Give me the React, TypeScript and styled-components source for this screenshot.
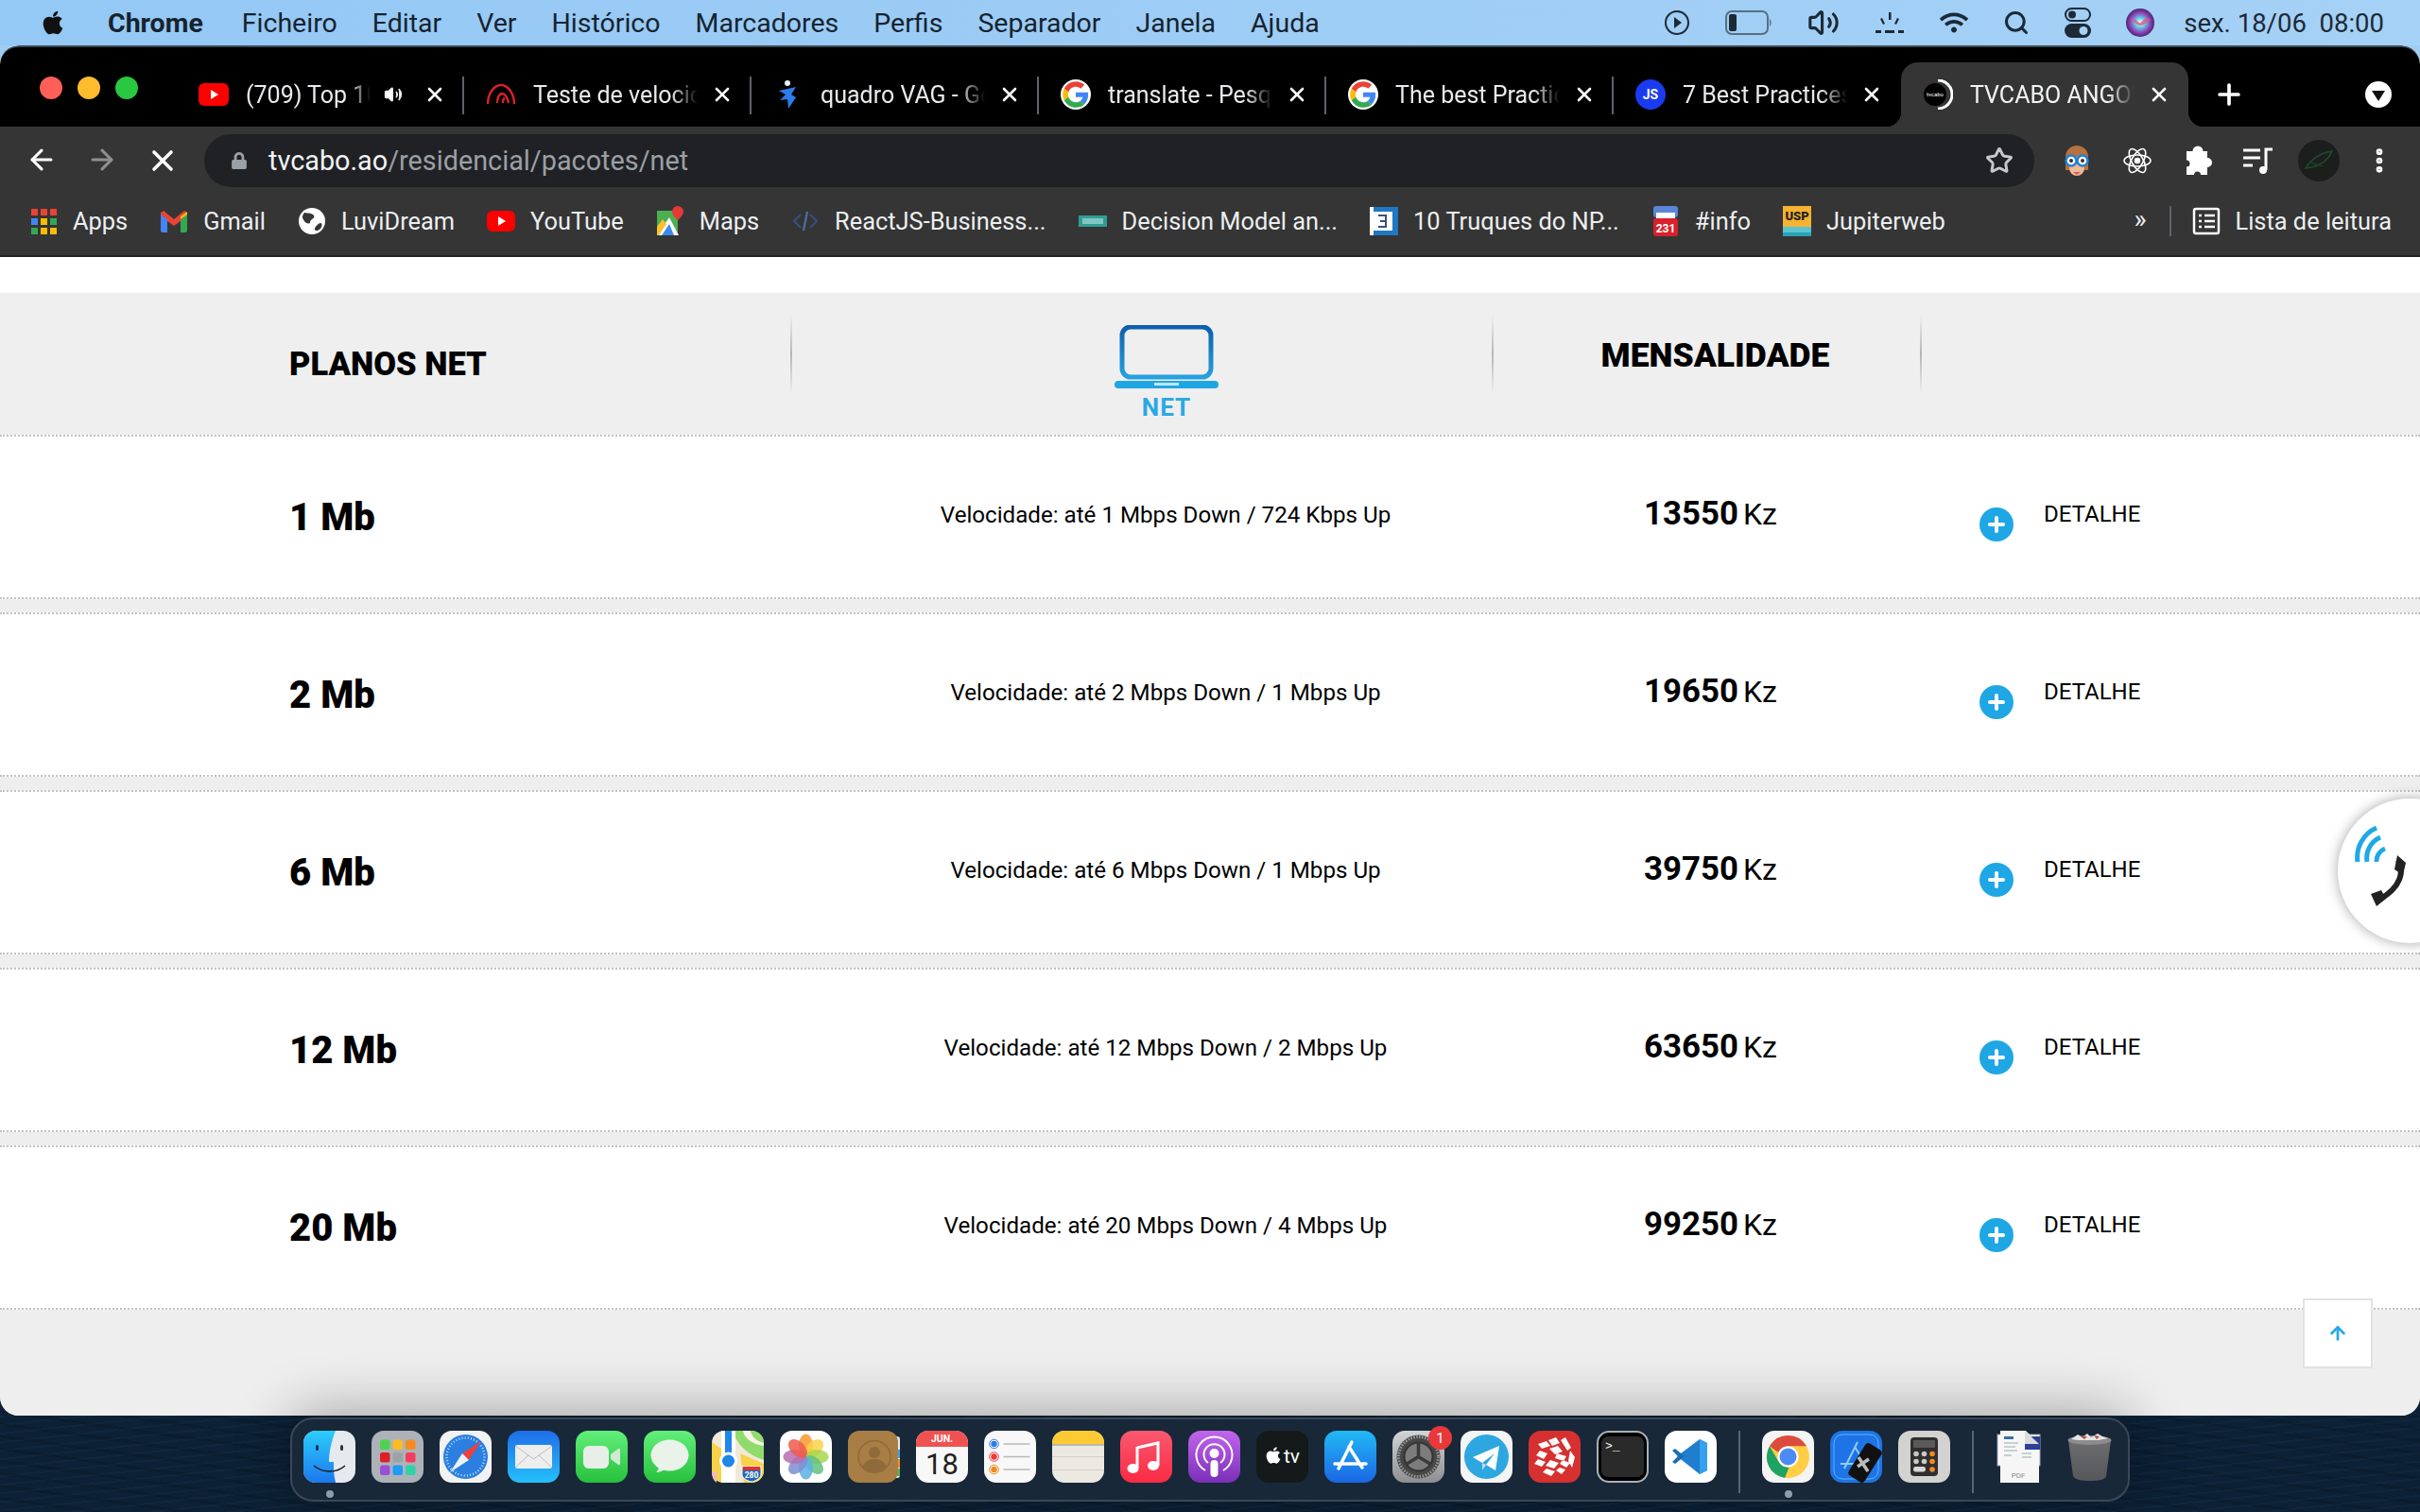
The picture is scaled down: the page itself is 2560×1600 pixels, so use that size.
import React from 'react';
import styled, { createGlobalStyle } from 'styled-components';
import { ArrowLeft, ArrowRight, X, Plus, Star, Search, MoreVertical, Volume2 } from 'lucide-react';
import { FaApple, FaLock, FaWifi } from 'react-icons/fa';

const GlobalStyle = createGlobalStyle`
  html, body {
    margin: 0;
    padding: 0;
    background: #0c2135;
  }
  * {
    box-sizing: border-box;
  }
`;

const Screen = styled.div`
  width: 2560px;
  height: 1600px;
  display: flex;
  flex-direction: column;
  overflow: hidden;
  font-family: Roboto, 'Liberation Sans', sans-serif;
  background: linear-gradient(#9ccdf6 0 90px, #0c2135 90px);
`;

/* mac menu bar */
const MenuBar = styled.div`
  height: 48px;
  flex: none;
  display: flex;
  align-items: center;
  padding: 0 38px 0 42px;
  background: linear-gradient(90deg, #94c8f5, #a6d1f6);
  color: #16232e;
  font-size: 28.5px;
`;

const MenuList = styled.div`
  display: flex;
  align-items: center;
  gap: 37px;
`;

const AppleMark = styled(FaApple)`
  margin-right: 7px;
`;

const MenuItem = styled.span<{ $bold?: boolean }>`
  font-weight: ${(p) => (p.$bold ? 700 : 400)};
  margin-right: ${(p) => (p.$bold ? 4 : 0)}px;
  white-space: nowrap;
`;

const StatusArea = styled.div`
  margin-left: auto;
  display: flex;
  align-items: center;
  gap: 37px;
  color: #1c2a36;
`;

const Clock = styled.span`
  white-space: pre;
  font-size: 27.5px;
  margin-left: -6px;
`;

/* browser window */
const Window = styled.div`
  height: 1450px;
  flex: none;
  display: flex;
  flex-direction: column;
  border-radius: 20px;
  overflow: hidden;
  background: #eee;
  position: relative;
`;

const TabStrip = styled.div`
  height: 86px;
  flex: none;
  display: flex;
  align-items: flex-end;
  background: #000;
  border-top: 2px solid #3e4a55;
  border-radius: 20px 20px 0 0;
`;

const TrafficLights = styled.div`
  width: 187px;
  flex: none;
  align-self: flex-start;
  display: flex;
  gap: 16px;
  padding: 31px 0 0 42px;
`;

const Light = styled.span<{ $color: string }>`
  width: 24px;
  height: 24px;
  border-radius: 50%;
  background: ${(p) => p.$color};
`;

const Tab = styled.div<{ $active?: boolean; $last?: boolean }>`
  width: 304px;
  height: 68px;
  flex: none;
  display: flex;
  align-items: center;
  padding: 0 19px 0 23px;
  position: relative;
  color: ${(p) => (p.$active ? '#f1f3f4' : '#e8eaed')};
  background: ${(p) => (p.$active ? '#353535' : 'transparent')};
  border-radius: 18px 18px 0 0;
  font-size: 25px;

  ${(p) =>
    !p.$active && !p.$last
      ? `&::after {
    content: '';
    position: absolute;
    right: 0;
    top: 15px;
    height: 40px;
    width: 2px;
    background: #5f6368;
  }`
      : ''}

  ${(p) =>
    p.$active
      ? `&::before, &::after {
    content: '';
    position: absolute;
    bottom: 0;
    width: 16px;
    height: 16px;
  }
  &::before {
    left: -16px;
    background: radial-gradient(circle at 0 0, transparent 16px, #353535 16.5px);
  }
  &::after {
    right: -16px;
    background: radial-gradient(circle at 100% 0, transparent 16px, #353535 16.5px);
  }`
      : ''}
`;

const Favicon = styled.svg`
  width: 32px;
  height: 32px;
  flex: none;
`;

const TabTitle = styled.span<{ $short?: boolean }>`
  margin-left: 18px;
  width: ${(p) => (p.$short ? 132 : 174)}px;
  flex: none;
  overflow: hidden;
  white-space: nowrap;
  -webkit-mask-image: linear-gradient(90deg, #000 84%, transparent);
  mask-image: linear-gradient(90deg, #000 84%, transparent);
`;

const SoundIcon = styled(Volume2)`
  margin-left: 14px;
  flex: none;
`;

const TabButton = styled.span`
  margin-left: auto;
  display: flex;
  color: #fff;
`;

const NewTab = styled.div`
  width: 70px;
  height: 68px;
  margin-left: 8px;
  display: flex;
  align-items: center;
  justify-content: center;
  color: #fff;
`;

const TabSearch = styled.div`
  width: 28px;
  height: 28px;
  margin: 0 0 20px 109px;
  border-radius: 50%;
  background: #fff;
  display: flex;
  align-items: center;
  justify-content: center;
  &::after {
    content: '';
    border-left: 7px solid transparent;
    border-right: 7px solid transparent;
    border-top: 11px solid #111;
    margin-top: 3px;
  }
`;

const Toolbar = styled.div`
  height: 72px;
  flex: none;
  display: flex;
  align-items: center;
  background: #353535;
  color: #fff;
`;

const NavButton = styled.div<{ $dim?: boolean }>`
  width: 64px;
  display: flex;
  justify-content: center;
  color: ${(p) => (p.$dim ? '#8f8f8f' : '#fff')};
`;

const NavGroup = styled.div`
  width: 216px;
  flex: none;
  padding-left: 12px;
  display: flex;
`;

const AddressBar = styled.div`
  width: 1936px;
  height: 56px;
  flex: none;
  border-radius: 28px;
  background: #202124;
  display: flex;
  align-items: center;
  padding: 0 22px 0 28px;
  font-size: 28.8px;
  color: #9aa0a6;
`;

const Domain = styled.span`
  color: #f1f3f4;
`;

const UrlText = styled.span`
  margin-left: 22px;
`;

const StarSlot = styled.span`
  margin-left: auto;
  display: flex;
  color: #c7c7c7;
`;

const ExtensionRow = styled.div`
  flex: 1;
  display: flex;
  align-items: center;
  gap: 20px;
  padding-left: 23px;
  color: #fff;
`;

const ExtensionSlot = styled.span`
  width: 44px;
  height: 44px;
  display: flex;
  align-items: center;
  justify-content: center;
`;

const BookmarkBar = styled.div`
  height: 66px;
  flex: none;
  display: flex;
  align-items: center;
  padding: 0 30px 8px 31px;
  background: #353535;
  border-bottom: 2px solid #232323;
  color: #eceff1;
  font-size: 25.4px;
`;

const BookmarkList = styled.div`
  display: flex;
  align-items: center;
  gap: 34px;
`;

const Bookmark = styled.div`
  display: flex;
  align-items: center;
  gap: 16px;
  white-space: nowrap;
`;

const BookmarkIcon = styled.svg`
  width: 30px;
  height: 32px;
  flex: none;
`;

const ReadingList = styled.div`
  margin-left: auto;
  display: flex;
  align-items: center;
  white-space: nowrap;
`;

const More = styled.span`
  font-size: 28px;
  padding-right: 24px;
  border-right: 2px solid #5f6368;
  height: 32px;
  line-height: 28px;
  margin-right: 22px;
`;

/* web page */
const Page = styled.div`
  flex: 1;
  display: flex;
  flex-direction: column;
  padding-top: 38px;
  background: linear-gradient(#fff 0 38px, #eee 38px);
  color: #000;
`;

const PlanHeader = styled.div`
  height: 150px;
  flex: none;
  display: grid;
  grid-template-columns: 838px 742px 453px 1fr;
  align-content: start;
  padding-top: 24px;
  background: #efefef;
`;

const HeaderCell = styled.div<{ $divider?: boolean }>`
  height: 82px;
  display: flex;
  align-items: center;
  border-right: ${(p) => (p.$divider ? '2px solid #bdbdbd' : 'none')};
  border-image: ${(p) => (p.$divider ? 'linear-gradient(transparent, #b5b5b5 50%, transparent) 1' : 'none')};
`;

const PlansTitle = styled(HeaderCell)`
  padding: 20px 0 0 306px;
  font-size: 34.5px;
  font-weight: 900;
`;

const NetCell = styled(HeaderCell)`
  flex-direction: column;
  justify-content: flex-start;
  padding: 10px 0 0 52px;
`;

const LaptopSvg = styled.svg`
  width: 110px;
  height: 68px;
  flex: none;
`;

const NetLabel = styled.div`
  margin-top: 7px;
  color: #2aa9e4;
  font-size: 26px;
  line-height: 24px;
  font-weight: 700;
  letter-spacing: 1px;
  flex: none;
`;

const MonthlyTitle = styled(HeaderCell)`
  justify-content: center;
  padding: 2px 0 0 18px;
  font-size: 35.5px;
  font-weight: 900;
`;

const PlanList = styled.div`
  display: flex;
  flex-direction: column;
  gap: 14px;
`;

const PlanRow = styled.div`
  height: 174px;
  display: grid;
  grid-template-columns: 838px 742px 453px 1fr;
  align-items: center;
  background: #fff;
  border-top: 2px dotted #c2c2c2;
  border-bottom: 2px dotted #c2c2c2;
`;

const PlanName = styled.div`
  padding-left: 306px;
  font-size: 40px;
  font-weight: 900;
`;

const PlanSpeed = styled.div`
  padding: 0 0 4px 48px;
  text-align: center;
  font-size: 24.15px;
`;

const PlanPrice = styled.div`
  padding: 0 0 8px 6px;
  text-align: center;
  font-size: 34.8px;
  font-weight: 700;
`;

const Currency = styled.span`
  font-size: 32px;
  font-weight: 400;
  margin-left: 5px;
`;

const DetailCell = styled.div`
  display: flex;
  align-items: center;
  gap: 32px;
  padding-left: 61px;
  font-size: 24px;
`;

const PlusIcon = styled.span`
  width: 36px;
  height: 36px;
  margin-top: 16px;
  border-radius: 50%;
  background: #1ea7e4;
  color: #fff;
  display: flex;
  align-items: center;
  justify-content: center;
`;

const DetailText = styled.span`
  margin-bottom: 6px;
`;

const PhoneBubble = styled.div`
  position: fixed;
  top: 845px;
  left: 2473px;
  width: 153px;
  height: 153px;
  padding: 25px 0 0 17px;
  border-radius: 50%;
  background: #fff;
  box-shadow: 0 0 14px rgba(0, 0, 0, 0.35);
`;

const BackToTop = styled.div`
  position: fixed;
  top: 1374px;
  left: 2436px;
  width: 74px;
  height: 74px;
  background: #fff;
  border: 2px solid #e2e2e2;
  display: flex;
  align-items: center;
  justify-content: center;
  color: #2aa8ea;
`;

const UpArrow = styled(ArrowRight)`
  transform: rotate(-90deg);
`;

/* dock */
const DockArea = styled.div`
  flex: 1;
  position: relative;
  z-index: 2;
  display: flex;
  justify-content: center;
  padding-top: 2px;
  background: repeating-linear-gradient(174deg, rgba(120, 160, 190, 0.04) 0 2px, transparent 2px 9px),
    repeating-linear-gradient(8deg, rgba(0, 0, 0, 0.14) 0 3px, transparent 3px 13px), #0c2135;
`;

const Dock = styled.div`
  width: 1946px;
  height: 89px;
  display: flex;
  gap: 17px;
  padding: 12px 12px 0;
  background: #182839;
  border: 2px solid #3a4857;
  border-radius: 24px;
  box-shadow: 0 -6px 60px rgba(0, 0, 0, 0.32);
`;

const DockSlot = styled.div`
  width: 55px;
  height: 55px;
  flex: none;
  position: relative;
`;

const DockSvg = styled.svg`
  width: 55px;
  height: 55px;
  display: block;
`;

const RunningDot = styled.span`
  position: absolute;
  left: 24px;
  bottom: -16px;
  width: 8px;
  height: 8px;
  border-radius: 50%;
  background: #8c9db2;
`;

const Badge = styled.span`
  position: absolute;
  top: -5px;
  right: -8px;
  width: 25px;
  height: 25px;
  border-radius: 50%;
  background: #e8383a;
  color: #fff;
  font-size: 15px;
  display: flex;
  align-items: center;
  justify-content: center;
`;

const DockDivider = styled.span`
  width: 2px;
  height: 66px;
  flex: none;
  margin: 0 6px;
  background: #55647a;
`;

const GoogleG = () => (
  <Favicon viewBox="-4 -4 56 56">
    <circle cx="24" cy="24" r="28" fill="#fff" />
    <path fill="#EA4335" d="M24 9.5c3.54 0 6.71 1.22 9.21 3.6l6.85-6.85C35.9 2.38 30.47 0 24 0 14.62 0 6.51 5.38 2.56 13.22l7.98 6.19C12.43 13.72 17.74 9.5 24 9.5z" />
    <path fill="#4285F4" d="M46.98 24.55c0-1.57-.15-3.09-.38-4.55H24v9.02h12.94c-.58 2.96-2.26 5.48-4.78 7.18l7.73 6c4.51-4.18 7.09-10.36 7.09-17.65z" />
    <path fill="#FBBC05" d="M10.53 28.59c-.48-1.45-.76-2.99-.76-4.59s.27-3.14.76-4.59l-7.98-6.19C.92 16.46 0 20.12 0 24c0 3.88.92 7.54 2.56 10.78l7.97-6.19z" />
    <path fill="#34A853" d="M24 48c6.48 0 11.93-2.13 15.89-5.81l-7.73-6c-2.15 1.45-4.92 2.3-8.16 2.3-6.26 0-11.57-4.22-13.47-9.91l-7.98 6.19C6.51 42.62 14.62 48 24 48z" />
  </Favicon>
);

const YoutubeIcon = () => (
  <Favicon viewBox="0 0 32 32">
    <rect x="0" y="4" width="32" height="24" rx="6" fill="#f00" />
    <path d="M13 11l8 5-8 5z" fill="#fff" />
  </Favicon>
);

const SpeedIcon = () => (
  <Favicon viewBox="0 0 32 32" fill="none" stroke="#d9202c" strokeWidth="2.4">
    <path d="M2 26C2 16 8 6 16 6s14 10 14 20" />
    <path d="M12 25c0-5 2-10 5-10s6 4 7 10" />
    <path d="M18 25c0-3 1-5 2-5" />
  </Favicon>
);

const QuadroIcon = () => (
  <Favicon viewBox="0 0 32 32">
    <circle cx="15" cy="4" r="3" fill="#e8f0ff" />
    <path d="M6 12l18-4-5 8 5 3-8 12-1-10-8 1 6-6z" fill="#2b7de9" />
  </Favicon>
);

const JsIcon = () => (
  <Favicon viewBox="0 0 32 32">
    <circle cx="16" cy="16" r="16" fill="#1a3bf0" />
    <text x="16" y="21" fontSize="14" fontWeight="700" fill="#fff" textAnchor="middle" fontFamily="Roboto">JS</text>
  </Favicon>
);

const TvcaboIcon = () => (
  <Favicon viewBox="0 0 32 32">
    <path d="M16 1a15 15 0 0 1 0 30" fill="none" stroke="#fff" strokeWidth="3" />
    <circle cx="13" cy="16" r="12" fill="#000" />
    <text x="13" y="18" fontSize="6" fill="#fff" textAnchor="middle" fontFamily="Roboto">tvcabo</text>
  </Favicon>
);

const AppsIcon = () => (
  <BookmarkIcon viewBox="0 0 30 32">
    {[0, 1, 2].map((r) =>
      [0, 1, 2].map((c) => (
        <rect
          key={`${r}${c}`}
          x={2 + c * 10}
          y={3 + r * 10}
          width="7"
          height="7"
          fill={[['#ea4335', '#ea4335', '#ea4335'], ['#4285f4', '#fbbc05', '#34a853'], ['#34a853', '#fbbc05', '#fbbc05']][r][c]}
        />
      ))
    )}
  </BookmarkIcon>
);

const GmailIcon = () => (
  <BookmarkIcon viewBox="0 0 30 32">
    <path d="M1 7l3-2 11 9 11-9 3 2v4L15 21 1 11z" fill="#ea4335" />
    <path d="M1 9l7 5v14H3a2 2 0 0 1-2-2z" fill="#4285f4" />
    <path d="M29 9l-7 5v14h5a2 2 0 0 0 2-2z" fill="#34a853" />
    <path d="M22 14l7-5V6l-7 5z" fill="#fbbc05" />
  </BookmarkIcon>
);

const GlobeIcon = () => (
  <BookmarkIcon viewBox="0 0 30 32">
    <circle cx="15" cy="16" r="14" fill="#fff" />
    <path d="M7 7c4 1 8 0 10 3s-4 4-4 7-5 1-6-1-4-4 0-9zM24 18c2 0 2 3 0 6-2 2-5 3-6 1s4-7 6-7z" fill="#353535" />
  </BookmarkIcon>
);

const YtMark = () => (
  <BookmarkIcon viewBox="0 0 30 32">
    <rect x="0" y="5" width="30" height="22" rx="6" fill="#f00" />
    <path d="M12 11l8 5-8 5z" fill="#fff" />
  </BookmarkIcon>
);

const MapsMark = () => (
  <BookmarkIcon viewBox="0 0 30 32">
    <path d="M1 5l22 0v26H1z" fill="#4caf50" />
    <path d="M1 31L14 12l10 19z" fill="#fff" />
    <path d="M6 31l8-12 5 12z" fill="#3b8be8" />
    <path d="M1 22l6-8 4 5-8 12H1z" fill="#fbc02d" />
    <path d="M23 0a6 6 0 0 1 6 6c0 4-6 9-6 9s-6-5-6-9a6 6 0 0 1 6-6z" fill="#e53935" />
  </BookmarkIcon>
);

const CodeMark = () => (
  <BookmarkIcon viewBox="0 0 30 32" fill="none" stroke="#35507f" strokeWidth="2.2">
    <path d="M10 9l-7 7 7 7M20 9l7 7-7 7" />
    <path d="M17 6l-4 20" stroke="#4a6ea8" />
  </BookmarkIcon>
);

const DecisionMark = () => (
  <BookmarkIcon viewBox="0 0 30 32">
    <rect x="0" y="10" width="30" height="12" fill="#2f9d96" />
    <rect x="4" y="13" width="22" height="6" fill="#b7e3df" opacity="0.6" />
  </BookmarkIcon>
);

const TruquesMark = () => (
  <BookmarkIcon viewBox="0 0 30 32">
    <rect x="0" y="1" width="30" height="30" fill="#fff" />
    <rect x="4" y="1" width="26" height="5" fill="#1f78c1" />
    <rect x="24" y="1" width="6" height="30" fill="#1f78c1" />
    <rect x="4" y="26" width="26" height="5" fill="#1f78c1" />
    <path d="M9 10h8v12H9" fill="none" stroke="#35507f" strokeWidth="2" />
    <path d="M11 16h5" stroke="#35507f" strokeWidth="2" />
  </BookmarkIcon>
);

const InfoMark = () => (
  <BookmarkIcon viewBox="0 0 30 32">
    <rect x="2" y="0" width="26" height="12" rx="3" fill="#5b85d6" />
    <rect x="5" y="7" width="20" height="6" fill="#fff" />
    <rect x="2" y="13" width="26" height="19" rx="3" fill="#d9202c" />
    <text x="15" y="28" fontSize="12" fontWeight="700" fill="#fff" textAnchor="middle" fontFamily="Roboto">231</text>
  </BookmarkIcon>
);

const UspMark = () => (
  <BookmarkIcon viewBox="0 0 30 32">
    <rect x="0" y="0" width="32" height="22" fill="#f7b231" />
    <rect x="0" y="22" width="32" height="6" fill="#5cc4d0" />
    <rect x="0" y="28" width="32" height="4" fill="#2aa3b5" />
    <text x="15" y="15" fontSize="13" fontWeight="900" fill="#222" textAnchor="middle" fontFamily="Roboto">USP</text>
  </BookmarkIcon>
);

const ListMark = () => (
  <BookmarkIcon viewBox="0 0 30 32" fill="none" stroke="#fff" strokeWidth="2.5">
    <rect x="2" y="3" width="26" height="26" rx="2" />
    <path d="M7 10h3M13 10h11M7 16h3M13 16h11M7 22h3M13 22h11" />
  </BookmarkIcon>
);

const LaptopLogo = () => (
  <LaptopSvg viewBox="0 0 110 68">
    <defs>
      <linearGradient id="laptop" x1="0" y1="0" x2="0" y2="1">
        <stop offset="0" stopColor="#0d5fae" />
        <stop offset="1" stopColor="#26a1e0" />
      </linearGradient>
    </defs>
    <rect x="8" y="2" width="94" height="53" rx="9" fill="none" stroke="url(#laptop)" strokeWidth="5" />
    <rect x="0" y="59" width="110" height="8" rx="4" fill="#1ea6e2" />
    <rect x="42" y="61" width="26" height="3" fill="#bfe6f8" />
  </LaptopSvg>
);

const PhoneLogo = () => (
  <svg width="60" height="90" viewBox="0 0 60 90" fill="none">
    <path d="M4 42A34 34 0 0 1 24 6" stroke="#1fa8e4" strokeWidth="5" />
    <path d="M14 42A24 24 0 0 1 28 16" stroke="#1fa8e4" strokeWidth="5" />
    <path d="M24 42A14 14 0 0 1 33 28" stroke="#1fa8e4" strokeWidth="5" />
    <path d="M47 40c6 12 4 28-20 42" stroke="#222" strokeWidth="6" />
    <path d="M46 35l9 8-3 13-9-6z" fill="#222" />
    <path d="M18 76l11-4 5 9-10 8z" fill="#222" />
  </svg>
);

const PuzzleMark = () => (
  <svg width="32" height="34" viewBox="0 0 32 34" fill="#fff">
    <path d="M4 7h6.500a5.500 5.500 0 1 1 11 0H26v7a5 5 0 1 1 0 10v8h-7a3.500 3.500 0 0 0-7 0H4v-8.500a3.500 3.500 0 0 0 0-7z" />
  </svg>
);

const StatusPlay = () => (
  <svg width="28" height="28" viewBox="0 0 28 28" fill="none" stroke="#1c2a36" strokeWidth="2">
    <circle cx="14" cy="14" r="12" />
    <path d="M11 8l8 6-8 6z" fill="#1c2a36" stroke="none" />
  </svg>
);

const StatusBattery = () => (
  <svg width="50" height="26" viewBox="0 0 50 26" fill="none">
    <rect x="1" y="1" width="44" height="24" rx="6" stroke="#56707f" strokeWidth="2" />
    <rect x="4" y="4" width="8" height="18" rx="2" fill="#1c2a36" />
    <path d="M47 9c2 1 2 7 0 8z" fill="#56707f" />
  </svg>
);

const StatusNight = () => (
  <svg width="32" height="24" viewBox="0 0 32 24" fill="#1c2a36">
    <rect x="1" y="20" width="6" height="3" />
    <rect x="11" y="20" width="10" height="3" />
    <rect x="25" y="20" width="6" height="3" />
    <rect x="15" y="1" width="2.5" height="8" />
    <path d="M6 8l2-1 3 6-2 1zM26 8l-2-1-3 6 2 1z" />
  </svg>
);

const StatusControl = () => (
  <svg width="28" height="32" viewBox="0 0 28 32">
    <rect x="1" y="1" width="26" height="13" rx="6.5" fill="none" stroke="#1c2a36" strokeWidth="2" />
    <circle cx="8" cy="7.5" r="4" fill="#1c2a36" />
    <rect x="0" y="17" width="28" height="15" rx="7.5" fill="#1c2a36" />
    <circle cx="20" cy="24.5" r="4.5" fill="#a6d1f6" />
  </svg>
);

const StatusSiri = () => (
  <svg width="30" height="30" viewBox="0 0 30 30">
    <defs>
      <radialGradient id="siri" cx="0.5" cy="0.5" r="0.6">
        <stop offset="0" stopColor="#fff" />
        <stop offset="0.3" stopColor="#5ec8e8" />
        <stop offset="0.6" stopColor="#8f3fb5" />
        <stop offset="1" stopColor="#111a3a" />
      </radialGradient>
    </defs>
    <circle cx="15" cy="15" r="15" fill="url(#siri)" />
    <path d="M4 12c6-4 8 4 11 3s6-8 11-3c-4 1-6 6-11 6s-6-6-11-6z" fill="#e6567c" opacity="0.8" />
  </svg>
);

const ReactMark = () => (
  <svg width="32" height="36" viewBox="0 0 32 36" fill="none" stroke="#fff" strokeWidth="1.6">
    <ellipse cx="16" cy="18" rx="14" ry="6" />
    <ellipse cx="16" cy="18" rx="14" ry="6" transform="rotate(60 16 18)" />
    <ellipse cx="16" cy="18" rx="14" ry="6" transform="rotate(120 16 18)" />
    <circle cx="16" cy="18" r="2.5" fill="#fff" />
  </svg>
);

const AvatarMark = () => (
  <svg width="32" height="40" viewBox="0 0 32 36">
    <path d="M4 28V14a12 12 0 0 1 24 0v14z" fill="#b5713f" />
    <path d="M8 14h16v12a8 8 0 0 1-16 0z" fill="#f0b894" />
    <circle cx="10" cy="18" r="5.5" fill="#fff" stroke="#1e7fd6" strokeWidth="2.5" />
    <circle cx="22" cy="18" r="5.5" fill="#fff" stroke="#1e7fd6" strokeWidth="2.5" />
    <circle cx="10" cy="18" r="2" fill="#333" />
    <circle cx="22" cy="18" r="2" fill="#333" />
    <path d="M12 30h8l-4 3z" fill="#d65a5a" />
  </svg>
);

const MediaMark = () => (
  <svg width="32" height="28" viewBox="0 0 32 28" fill="none" stroke="#fff" strokeWidth="3">
    <path d="M0 3h18M0 11h18M0 19h10" />
    <path d="M24 24V2h7" />
    <circle cx="21" cy="24" r="2.5" fill="#fff" />
  </svg>
);

const ProfileMark = () => (
  <svg width="44" height="44" viewBox="0 0 44 44">
    <circle cx="22" cy="22" r="22" fill="#1b1e1d" />
    <path d="M8 30c6-10 16-16 28-18-4 9-12 15-22 17z" fill="none" stroke="#1f4a2d" strokeWidth="1.6" />
    <path d="M14 24l12 4" stroke="#1f4a2d" strokeWidth="1.2" />
  </svg>
);

const appIcon = (name: string) => {
  switch (name) {
    case 'finder':
      return (
        <DockSvg viewBox="0 0 55 55">
          <defs>
            <linearGradient id="fb" x1="0" y1="0" x2="0" y2="1">
              <stop offset="0" stopColor="#2bcdfb" />
              <stop offset="1" stopColor="#1c78ee" />
            </linearGradient>
          </defs>
          <rect width="55" height="55" rx="13" fill="#e6e9ee" />
          <path d="M13 0h21c-4 10-7 22-7 33h5c0 7 0 15 2 22H13A13 13 0 0 1 0 42V13A13 13 0 0 1 13 0z" fill="url(#fb)" />
          <rect x="13" y="15" width="3" height="6" rx="1.5" fill="#14304f" />
          <rect x="39" y="15" width="3" height="6" rx="1.5" fill="#333" />
          <path d="M11 37c10 8 24 8 33 0" fill="none" stroke="#1a1a1a" strokeWidth="1.5" />
        </DockSvg>
      );
    case 'launchpad': {
      const colors = ['#4fd24f', '#fcbb22', '#f68c1e', '#df1f26', '#9aa4a8', '#f73b5f', '#9b4fd8', '#1f9bf5', '#2cd3a4'];
      return (
        <DockSvg viewBox="0 0 55 55">
          <rect width="55" height="55" rx="13" fill="#adb2b8" />
          {colors.map((c, i) => (
            <rect key={c} x={9 + (i % 3) * 13.5} y={9.5 + Math.floor(i / 3) * 13.5} width="10.5" height="10.5" rx="2.5" fill={c} />
          ))}
        </DockSvg>
      );
    }
    case 'safari':
      return (
        <DockSvg viewBox="0 0 55 55">
          <rect width="55" height="55" rx="13" fill="#f2f2f2" />
          <circle cx="27.5" cy="27.5" r="23.5" fill="#2a7fe0" />
          <circle cx="27.5" cy="27.5" r="20" fill="none" stroke="#bfe0fb" strokeWidth="2.5" strokeDasharray="1 2.2" />
          <path d="M44 11L24 24l7 7z" fill="#ee3f3a" />
          <path d="M11 44l13-20 7 7z" fill="#eef1f4" />
        </DockSvg>
      );
    case 'mail':
      return (
        <DockSvg viewBox="0 0 55 55">
          <defs>
            <linearGradient id="ml" x1="0" y1="0" x2="0" y2="1">
              <stop offset="0" stopColor="#1f6ee8" />
              <stop offset="1" stopColor="#25c0fb" />
            </linearGradient>
          </defs>
          <rect width="55" height="55" rx="13" fill="url(#ml)" />
          <rect x="8" y="15" width="39" height="25" rx="2.5" fill="#eeeeee" />
          <path d="M8 16l19.500 14L47 16M8 39l14-13M47 39L33 26" fill="none" stroke="#bdbdbd" strokeWidth="1" />
        </DockSvg>
      );
    case 'facetime':
      return (
        <DockSvg viewBox="0 0 55 55">
          <defs>
            <linearGradient id="ft" x1="0" y1="0" x2="0" y2="1">
              <stop offset="0" stopColor="#62ef7a" />
              <stop offset="1" stopColor="#27c03d" />
            </linearGradient>
          </defs>
          <rect width="55" height="55" rx="13" fill="url(#ft)" />
          <rect x="8" y="16" width="27" height="24" rx="6" fill="#e8efe8" />
          <path d="M37 25l8-6c1-.5 2 0 2 1v15c0 1-1 1.500-2 1l-8-6z" fill="#cfe9d2" />
        </DockSvg>
      );
    case 'messages':
      return (
        <DockSvg viewBox="0 0 55 55">
          <defs>
            <linearGradient id="ms" x1="0" y1="0" x2="0" y2="1">
              <stop offset="0" stopColor="#62ef7a" />
              <stop offset="1" stopColor="#27c03d" />
            </linearGradient>
          </defs>
          <rect width="55" height="55" rx="13" fill="url(#ms)" />
          <ellipse cx="27.5" cy="26" rx="20" ry="16.500" fill="#e9f3ea" />
          <path d="M16 37c0 3-1 5-3 7 4 0 8-2 10-4z" fill="#e9f3ea" />
        </DockSvg>
      );
    case 'maps':
      return (
        <DockSvg viewBox="0 0 55 55">
          <rect width="55" height="55" rx="13" fill="#f1e9d8" />
          <path d="M22 0h20a13 13 0 0 1 13 13v18C38 26 26 14 22 0z" fill="#8fdc6c" />
          <path d="M33 0h8c1 6 6 11 14 13v3C44 15 34 8 33 0z" fill="#f7f3e8" />
          <path d="M0 12l20 14v29H13A13 13 0 0 1 0 42z" fill="#f7d24a" />
          <path d="M0 44l5-1v12a13 13 0 0 1-5-11z" fill="#f5b7c4" />
          <path d="M30 24l25 11v7a13 13 0 0 1-13 13h-8z" fill="#f7d24a" />
          <rect x="10" y="0" width="15" height="55" fill="#fff" />
          <rect x="14" y="0" width="7" height="26" fill="#1f86ea" />
          <circle cx="17.500" cy="32" r="9.500" fill="#fff" />
          <circle cx="17.500" cy="32" r="6.500" fill="#1f86ea" />
          <path d="M32 38h20v9c0 3-7 7-10 7s-10-4-10-7z" fill="#1e68b8" stroke="#fff" strokeWidth="1" />
          <rect x="33" y="38" width="18" height="4" fill="#d8343a" />
          <text x="42" y="50" fontSize="8.500" fontWeight="700" fill="#fff" textAnchor="middle" fontFamily="Roboto">280</text>
        </DockSvg>
      );
    case 'photos': {
      const petals = ['#f79a2c', '#fbd14b', '#a8d64b', '#62c27e', '#5bb0e6', '#7e8ed1', '#b76fb3', '#ee5b4e'];
      return (
        <DockSvg viewBox="0 0 55 55">
          <rect width="55" height="55" rx="13" fill="#fff" />
          {petals.map((c, i) => (
            <ellipse key={c} cx="27.500" cy="15.500" rx="7.500" ry="12" fill={c} opacity="0.85" transform={`rotate(${i * 45} 27.500 27.500)`} />
          ))}
        </DockSvg>
      );
    }
    case 'contacts':
      return (
        <DockSvg viewBox="0 0 55 55">
          <rect x="48" y="6" width="7" height="44" rx="3" fill="#e8e8e8" />
          <rect x="51" y="20" width="4" height="9" fill="#3ba7e0" />
          <rect x="51" y="30" width="4" height="9" fill="#ef8c2c" />
          <rect x="51" y="40" width="4" height="8" fill="#4fb659" />
          <rect width="53" height="55" rx="12" fill="#a87e45" />
          <circle cx="28" cy="27.500" r="17" fill="none" stroke="#8f6a3a" strokeWidth="1.500" />
          <circle cx="28" cy="23" r="6" fill="#8f6a3a" />
          <path d="M15 38c3-6 8-8 13-8s10 2 13 8c-3 3-8 6-13 6s-10-3-13-6z" fill="#8f6a3a" />
        </DockSvg>
      );
    case 'calendar':
      return (
        <DockSvg viewBox="0 0 55 55">
          <rect width="55" height="55" rx="13" fill="#f8f8f8" />
          <path d="M0 17V13A13 13 0 0 1 13 0h29a13 13 0 0 1 13 13v4z" fill="#f05252" />
          <text x="27.500" y="12" fontSize="10.500" fontWeight="700" fill="#fff" textAnchor="middle" fontFamily="Roboto">JUN.</text>
          <text x="27.500" y="46" fontSize="31" fill="#222" textAnchor="middle" fontFamily="Roboto">18</text>
        </DockSvg>
      );
    case 'reminders':
      return (
        <DockSvg viewBox="0 0 55 55">
          <rect width="55" height="55" rx="13" fill="#f8f8f8" />
          {['#2a7de8', '#ea3a3a', '#ef8c1e'].map((c, i) => (
            <g key={c}>
              <circle cx="10.500" cy={14 + i * 13.500} r="4.800" fill="none" stroke={c} strokeWidth="1" />
              <circle cx="10.500" cy={14 + i * 13.500} r="3.200" fill={c} />
              <rect x="20.500" y={13.300 + i * 13.500} width="28" height="1.500" fill="#b9b9b9" />
            </g>
          ))}
        </DockSvg>
      );
    case 'notes':
      return (
        <DockSvg viewBox="0 0 55 55">
          <rect width="55" height="55" rx="13" fill="#ebe9e2" />
          <path d="M0 14v-1A13 13 0 0 1 13 0h29a13 13 0 0 1 13 13v1z" fill="#fccb33" />
          <rect y="14" width="55" height="2" fill="#b9b7ae" />
          <rect y="27" width="55" height="1" fill="#d2d0c8" />
          <rect y="41" width="55" height="1" fill="#d2d0c8" />
        </DockSvg>
      );
    case 'music':
      return (
        <DockSvg viewBox="0 0 55 55">
          <defs>
            <linearGradient id="mu" x1="0" y1="0" x2="0" y2="1">
              <stop offset="0" stopColor="#f9596f" />
              <stop offset="1" stopColor="#fa2a44" />
            </linearGradient>
          </defs>
          <rect width="55" height="55" rx="13" fill="url(#mu)" />
          <path d="M18 18l22-5v24" fill="none" stroke="#fff" strokeWidth="3" />
          <path d="M18 17v22" stroke="#fff" strokeWidth="3" />
          <ellipse cx="13.500" cy="40" rx="6" ry="5" fill="#fff" />
          <ellipse cx="35" cy="37" rx="6" ry="5" fill="#fff" />
        </DockSvg>
      );
    case 'podcasts':
      return (
        <DockSvg viewBox="0 0 55 55">
          <defs>
            <linearGradient id="pc" x1="0" y1="0" x2="0" y2="1">
              <stop offset="0" stopColor="#c265ec" />
              <stop offset="1" stopColor="#7a2fb8" />
            </linearGradient>
          </defs>
          <rect width="55" height="55" rx="13" fill="url(#pc)" />
          <path d="M18 42a19 19 0 1 1 19 0" fill="none" stroke="#fff" strokeWidth="2" />
          <path d="M21 34a11 11 0 1 1 13 0" fill="none" stroke="#fff" strokeWidth="2" />
          <circle cx="27.500" cy="24" r="5" fill="#fff" />
          <rect x="23.500" y="31" width="8" height="18" rx="4" fill="#fff" />
        </DockSvg>
      );
    case 'tv':
      return (
        <DockSvg viewBox="0 0 55 55">
          <rect width="55" height="55" rx="13" fill="#141a1a" />
          <FaApple x="8" y="16" size="20" color="#fff" />
          <text x="29" y="34" fontSize="21" fill="#fff" fontFamily="Roboto">tv</text>
        </DockSvg>
      );
    case 'appstore':
      return (
        <DockSvg viewBox="0 0 55 55">
          <defs>
            <linearGradient id="as" x1="0" y1="0" x2="0" y2="1">
              <stop offset="0" stopColor="#22b9f5" />
              <stop offset="1" stopColor="#1b66e4" />
            </linearGradient>
          </defs>
          <rect width="55" height="55" rx="13" fill="url(#as)" />
          <path d="M29 12L15 40M26 17l14 22M11 35h33" fill="none" stroke="#fff" strokeWidth="3.500" strokeLinecap="round" />
        </DockSvg>
      );
    case 'prefs':
      return (
        <DockSvg viewBox="0 0 55 55">
          <defs>
            <linearGradient id="sp" x1="0" y1="0" x2="0" y2="1">
              <stop offset="0" stopColor="#d2d4d6" />
              <stop offset="1" stopColor="#8e8f91" />
            </linearGradient>
          </defs>
          <rect width="55" height="55" rx="13" fill="url(#sp)" />
          <circle cx="27.500" cy="27.500" r="23" fill="#474747" />
          <circle cx="27.500" cy="27.500" r="21" fill="none" stroke="#9a9a9a" strokeWidth="3" strokeDasharray="1.500 1.500" />
          <circle cx="27.500" cy="27.500" r="15" fill="#7c7c7c" stroke="#333" strokeWidth="2" />
          <path d="M27.500 27.500V12M27.500 27.500l-13 8M27.500 27.500l13 8" stroke="#3a3a3a" strokeWidth="3.500" />
        </DockSvg>
      );
    case 'telegram':
      return (
        <DockSvg viewBox="0 0 55 55">
          <rect width="55" height="55" rx="13" fill="#f4f4f4" />
          <circle cx="27.500" cy="27.500" r="23.500" fill="#2ea7e0" />
          <path d="M13 28l28-12-4 26-10-6 9-12-13 10z" fill="#fff" />
          <path d="M23 34l4 2-4 6z" fill="#c8daea" />
        </DockSvg>
      );
    case 'cube':
      return (
        <DockSvg viewBox="0 0 55 55">
          <rect width="55" height="55" rx="13" fill="#d63030" />
          <g fill="#fff">
            <path d="M10 14l9-3 4 5-9 3zM21 10l8-3 4 6-8 3zM8 26l4-5 8 3-4 6zM22 19l9-3 5 6-8 3zM6 35l4-5 8 3-4 5zM18 37l5-6 9 3-5 6zM15 44l4-4 9 3-4 5zM30 24l-2 5 9 3 3-5zM33 35l3-4 8 3-4 5zM29 42l4-3 6 2-4 5zM34 10l5-3 6 11-4 3zM44 21l5 7-3 11-4-7z" />
          </g>
        </DockSvg>
      );
    case 'terminal':
      return (
        <DockSvg viewBox="0 0 55 55">
          <rect x="1" y="1" width="53" height="53" rx="12" fill="#000" stroke="#a9b2b6" strokeWidth="2" />
          <rect x="5" y="6" width="45" height="43" rx="7" fill="#2a2a2a" />
          <text x="9" y="20" fontSize="13" fill="#fff" fontFamily="Liberation Mono">&gt;_</text>
        </DockSvg>
      );
    case 'vscode':
      return (
        <DockSvg viewBox="0 0 55 55">
          <rect width="55" height="55" rx="13" fill="#fff" />
          <path d="M37 9l8 4v29l-8 4-24-19z" fill="#1f7fce" />
          <path d="M37 9l8 4v29l-8 4z" fill="#34a0ee" />
          <path d="M8 21l3-2 10 8-10 8-3-2 6-6z" fill="#1a6db3" />
        </DockSvg>
      );
    case 'chrome':
      return (
        <DockSvg viewBox="0 0 55 55">
          <rect width="55" height="55" rx="13" fill="#f4f4f4" />
          <circle cx="27.500" cy="27.500" r="22.500" fill="#ffce45" />
          <path d="M27.500 5a22.500 22.500 0 0 1 19.500 11.300H27.500a11.300 11.300 0 0 0-10.300 6.600L8 16.300A22.500 22.500 0 0 1 27.500 5z" fill="#dd4b3e" />
          <path d="M8 16.300l9.700 16.800a11.300 11.300 0 0 0 10.800 5.600L24 50A22.500 22.500 0 0 1 8 16.300z" fill="#1ea362" />
          <circle cx="27.500" cy="27.500" r="11" fill="#fff" />
          <circle cx="27.500" cy="27.500" r="9" fill="#4c8bf5" />
        </DockSvg>
      );
    case 'xcode':
      return (
        <DockSvg viewBox="0 0 55 55">
          <rect width="55" height="55" rx="13" fill="#1e74e6" />
          <rect x="4" y="4" width="47" height="47" rx="9" fill="none" stroke="#5cb5f5" strokeWidth="1" />
          <path d="M29 12L15 40M26 17l14 22M11 35h33" fill="none" stroke="#8fcdfa" strokeWidth="2" />
          <rect x="27" y="14" width="20" height="40" rx="4" fill="#111" transform="rotate(32 37 34)" />
          <path d="M30 28l10 15M29 38l12-8" stroke="#bbb" strokeWidth="3.500" />
        </DockSvg>
      );
    case 'calc':
      return (
        <DockSvg viewBox="0 0 55 55">
          <rect width="55" height="55" rx="13" fill="#d2d2d0" />
          <rect x="13" y="7" width="29" height="41" rx="4" fill="#2f2f2f" />
          <rect x="16" y="10" width="23" height="8" rx="1" fill="#5a5a5a" />
          {[0, 1].map((r) =>
            [0, 1, 2].map((c) => (
              <circle key={`${r}${c}`} cx={19 + c * 8.500} cy={24.500 + r * 8} r="2.800" fill={c === 2 ? '#f08c1e' : '#c9c9c9'} />
            ))
          )}
          <rect x="16" y="38" width="13" height="5.500" rx="2.700" fill="#d8d8d8" />
          <circle cx="36" cy="41" r="2.800" fill="#f08c1e" />
        </DockSvg>
      );
    case 'pdf':
      return (
        <DockSvg viewBox="0 0 55 55">
          <rect x="2" y="4" width="45" height="33" fill="#fff" stroke="#99a" strokeWidth="1" />
          <path d="M5 0h27l14 14v41H5z" fill="#f6f6f6" />
          <rect x="31" y="6" width="16" height="14" fill="#2d3f96" />
          <path d="M31 0v14h15z" fill="#dcdcdc" />
          <rect x="9" y="6" width="10" height="3" fill="#3a6ea5" />
          <path d="M9 13h15M9 17h12M9 21h14M9 26h8M28 24h10M28 28h10" stroke="#9aa" strokeWidth="1" />
          <text x="24" y="50" fontSize="8" fill="#8c8c8c" textAnchor="middle" fontFamily="Roboto">PDF</text>
        </DockSvg>
      );
    default:
      return (
        <DockSvg viewBox="0 0 55 55">
          <defs>
            <linearGradient id="tr" x1="0" y1="0" x2="0" y2="1">
              <stop offset="0" stopColor="#6d6d6f" />
              <stop offset="1" stopColor="#55575a" />
            </linearGradient>
          </defs>
          <path d="M5 10h45l-5 38c-1 4-8 5-17 5s-16-1-18-5z" fill="url(#tr)" />
          <ellipse cx="27.500" cy="10" rx="23" ry="5" fill="#8c8c8e" />
          <path d="M8 9l7-5 5 3 5-4 4 4 7-4 5 3 6 2-10 2H15z" fill="#e5e5e5" />
          <path d="M18 6l4 3 3-3zM32 5l3 4 3-3z" fill="#c14e3f" />
        </DockSvg>
      );
  }
};

const menuItems = ['Ficheiro', 'Editar', 'Ver', 'Histórico', 'Marcadores', 'Perfis', 'Separador', 'Janela', 'Ajuda'];

const tabs = [
  { title: '(709) Top 10 músicas', icon: <YoutubeIcon />, sound: true },
  { title: 'Teste de velocidade', icon: <SpeedIcon /> },
  { title: 'quadro VAG - Google', icon: <QuadroIcon /> },
  { title: 'translate - Pesquisa', icon: <GoogleG /> },
  { title: 'The best Practices', icon: <GoogleG /> },
  { title: '7 Best Practices', icon: <JsIcon />, last: true },
  { title: 'TVCABO ANGOLA', icon: <TvcaboIcon />, active: true },
];

const bookmarks = [
  { label: 'Apps', icon: <AppsIcon /> },
  { label: 'Gmail', icon: <GmailIcon /> },
  { label: 'LuviDream', icon: <GlobeIcon /> },
  { label: 'YouTube', icon: <YtMark /> },
  { label: 'Maps', icon: <MapsMark /> },
  { label: 'ReactJS-Business...', icon: <CodeMark /> },
  { label: 'Decision Model an...', icon: <DecisionMark /> },
  { label: '10 Truques do NP...', icon: <TruquesMark /> },
  { label: '#info', icon: <InfoMark /> },
  { label: 'Jupiterweb', icon: <UspMark /> },
];

const plans = [
  { name: '1 Mb', speed: 'Velocidade: até 1 Mbps Down / 724 Kbps Up', price: '13550' },
  { name: '2 Mb', speed: 'Velocidade: até 2 Mbps Down / 1 Mbps Up', price: '19650' },
  { name: '6 Mb', speed: 'Velocidade: até 6 Mbps Down / 1 Mbps Up', price: '39750' },
  { name: '12 Mb', speed: 'Velocidade: até 12 Mbps Down / 2 Mbps Up', price: '63650' },
  { name: '20 Mb', speed: 'Velocidade: até 20 Mbps Down / 4 Mbps Up', price: '99250' },
];

const dockMain = ['finder', 'launchpad', 'safari', 'mail', 'facetime', 'messages', 'maps', 'photos', 'contacts', 'calendar', 'reminders', 'notes', 'music', 'podcasts', 'tv', 'appstore', 'prefs', 'telegram', 'cube', 'terminal', 'vscode'];

const App: React.FC = () => {
  return (
    <Screen>
      <GlobalStyle />
      <MenuBar>
        <MenuList>
          <AppleMark size={28} color="#111" />
          <MenuItem $bold>Chrome</MenuItem>
          {menuItems.map((item) => (
            <MenuItem key={item}>{item}</MenuItem>
          ))}
        </MenuList>
        <StatusArea>
          <StatusPlay />
          <StatusBattery />
          <Volume2 size={34} strokeWidth={2.2} />
          <StatusNight />
          <FaWifi size={30} />
          <Search size={28} strokeWidth={2.6} />
          <StatusControl />
          <StatusSiri />
          <Clock>sex. 18/06  08:00</Clock>
        </StatusArea>
      </MenuBar>

      <Window>
        <TabStrip>
          <TrafficLights>
            <Light $color="#ff5f57" />
            <Light $color="#febc2e" />
            <Light $color="#28c840" />
          </TrafficLights>
          {tabs.map((tab) => (
            <Tab key={tab.title} $active={tab.active} $last={tab.last}>
              {tab.icon}
              <TabTitle $short={tab.sound}>{tab.title}</TabTitle>
              {tab.sound && <SoundIcon size={20} fill="#fff" />}
              <TabButton>
                <X size={24} strokeWidth={2.6} />
              </TabButton>
            </Tab>
          ))}
          <NewTab>
            <Plus size={34} strokeWidth={2.6} />
          </NewTab>
          <TabSearch />
        </TabStrip>

        <Toolbar>
          <NavGroup>
            <NavButton>
              <ArrowLeft size={34} strokeWidth={2.2} />
            </NavButton>
            <NavButton $dim>
              <ArrowRight size={34} strokeWidth={2.2} />
            </NavButton>
            <NavButton>
              <X size={36} strokeWidth={2.4} />
            </NavButton>
          </NavGroup>
          <AddressBar>
            <FaLock size={18} />
            <UrlText>
              <Domain>tvcabo.ao</Domain>/residencial/pacotes/net
            </UrlText>
            <StarSlot>
              <Star size={30} strokeWidth={2.4} />
            </StarSlot>
          </AddressBar>
          <ExtensionRow>
            <ExtensionSlot>
              <AvatarMark />
            </ExtensionSlot>
            <ExtensionSlot>
              <ReactMark />
            </ExtensionSlot>
            <ExtensionSlot>
              <PuzzleMark />
            </ExtensionSlot>
            <ExtensionSlot>
              <MediaMark />
            </ExtensionSlot>
            <ExtensionSlot>
              <ProfileMark />
            </ExtensionSlot>
            <ExtensionSlot>
              <MoreVertical size={32} strokeWidth={3} />
            </ExtensionSlot>
          </ExtensionRow>
        </Toolbar>

        <BookmarkBar>
          <BookmarkList>
            {bookmarks.map((b) => (
              <Bookmark key={b.label}>
                {b.icon}
                {b.label}
              </Bookmark>
            ))}
          </BookmarkList>
          <ReadingList>
            <More>»</More>
            <Bookmark>
              <ListMark />
              Lista de leitura
            </Bookmark>
          </ReadingList>
        </BookmarkBar>

        <Page>
          <PlanHeader>
            <PlansTitle $divider>PLANOS NET</PlansTitle>
            <NetCell $divider>
              <LaptopLogo />
              <NetLabel>NET</NetLabel>
            </NetCell>
            <MonthlyTitle $divider>MENSALIDADE</MonthlyTitle>
          </PlanHeader>
          <PlanList>
            {plans.map((plan) => (
              <PlanRow key={plan.name}>
                <PlanName>{plan.name}</PlanName>
                <PlanSpeed>{plan.speed}</PlanSpeed>
                <PlanPrice>
                  {plan.price}
                  <Currency>Kz</Currency>
                </PlanPrice>
                <DetailCell>
                  <PlusIcon>
                    <Plus size={24} strokeWidth={4} />
                  </PlusIcon>
                  <DetailText>DETALHE</DetailText>
                </DetailCell>
              </PlanRow>
            ))}
          </PlanList>
        </Page>
      </Window>

      <PhoneBubble>
        <PhoneLogo />
      </PhoneBubble>
      <BackToTop>
        <UpArrow size={22} strokeWidth={3} />
      </BackToTop>

      <DockArea>
        <Dock>
          {dockMain.map((app) => (
            <DockSlot key={app}>
              {appIcon(app)}
              {app === 'finder' && <RunningDot />}
              {app === 'prefs' && <Badge>1</Badge>}
            </DockSlot>
          ))}
          <DockDivider />
          <DockSlot>
            {appIcon('chrome')}
            <RunningDot />
          </DockSlot>
          <DockSlot>{appIcon('xcode')}</DockSlot>
          <DockSlot>{appIcon('calc')}</DockSlot>
          <DockDivider />
          <DockSlot>{appIcon('pdf')}</DockSlot>
          <DockSlot>{appIcon('trash')}</DockSlot>
        </Dock>
      </DockArea>
    </Screen>
  );
};

export default App;
